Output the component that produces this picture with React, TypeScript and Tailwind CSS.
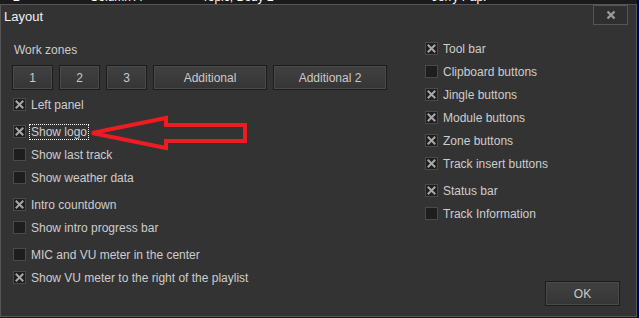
import React from "react";

const font = { fontFamily: '"Liberation Sans", Arial, sans-serif' };

function Box({ checked }: { checked: boolean }) {
  return (
    <div className="w-[13px] h-[13px] shrink-0 border border-[#4a4a4a] bg-[#1e1e1e] flex items-center justify-center">
      {checked && (
        <svg width="9" height="9" viewBox="0 0 9 9">
          <path d="M1.5 1.5 L7.5 7.5 M7.5 1.5 L1.5 7.5" stroke="#a8a8a8" strokeWidth="2" strokeLinecap="square" />
        </svg>
      )}
    </div>
  );
}

function Row({ label, checked, mt = "", focus = false }: { label: string; checked: boolean; mt?: string; focus?: boolean }) {
  return (
    <div className={`h-[23px] flex items-center gap-[3px] ${mt}`}>
      <Box checked={checked} />
      <span
        className={
          focus
            ? "text-[12px] text-[#cdcdcd] leading-[14px] border border-dotted border-white px-px"
            : "text-[12px] text-[#cdcdcd] leading-[14px] px-[2px]"
        }
      >
        {label}
      </span>
    </div>
  );
}

function Btn({ label, w }: { label: string; w: string }) {
  return (
    <div className={`${w} h-[25px] border border-[#1c1c1c] bg-[#1c1c1c]`}>
      <div className="w-full h-full border border-[#4a4a4a] bg-gradient-to-b from-[#404040] to-[#363636] flex items-center justify-center text-[12px] text-[#cacaca]">
        {label}
      </div>
    </div>
  );
}

export default function App() {
  return (
    <div className="w-[639px] h-[318px] bg-[#1b1b1b] relative overflow-hidden" style={font}>
      <div className="flex h-[318px]">
        <div className="w-[637px] flex flex-col">
          {/* top strip with clipped text */}
          <div className="h-[4px] overflow-hidden relative bg-[#1b1b1b] text-white text-[12px] leading-[14px]">
            <div className="flex -mt-[10px]">
              <span className="ml-[13px]">2</span>
              <span className="ml-[70px]">Column A</span>
              <span className="ml-[60px]">Topic, Body 2</span>
              <span className="ml-[158px]">Jerry Pap.</span>
            </div>
          </div>
          {/* dialog */}
          <div className="h-[313px] border border-[#565656] bg-[#333333] flex flex-col">
            <div className="h-[21px] flex items-start justify-between pr-[8px]">
              <span className="pl-[3px] pt-[4px] text-[13px] leading-[15px] text-[#f0f0f0]">Layout</span>
              <div className="w-[35px] h-[20px] border border-[#555555] bg-[#2f2f2f] flex items-center justify-center">
                <svg width="10" height="10" viewBox="0 0 10 10">
                  <path d="M1.5 1.5 L8.5 8.5 M8.5 1.5 L1.5 8.5" stroke="#9a9a9a" strokeWidth="2.4" />
                </svg>
              </div>
            </div>
            <div className="flex-1 flex">
              {/* left column */}
              <div className="w-[424px] pl-[11px] flex flex-col">
                <div className="mt-[16px] ml-[2px] h-[16px] flex items-center text-[12px] text-[#cdcdcd]">Work zones</div>
                <div className="mt-[7px] flex gap-[6px]">
                  <Btn label="1" w="w-[41px]" />
                  <Btn label="2" w="w-[41px]" />
                  <Btn label="3" w="w-[41px]" />
                  <Btn label="Additional" w="w-[114px]" />
                  <Btn label="Additional 2" w="w-[114px]" />
                </div>
                <div className="pl-[1px] flex flex-col">
                  <Row label="Left panel" checked mt="mt-[3px]" />
                  <Row label="Show logo" checked mt="mt-[4px]" focus />
                  <Row label="Show last track" checked={false} />
                  <Row label="Show weather data" checked={false} />
                  <Row label="Intro countdown" checked mt="mt-[4px]" />
                  <Row label="Show intro progress bar" checked={false} />
                  <Row label="MIC and VU meter in the center" checked={false} mt="mt-[4px]" />
                  <Row label="Show VU meter to the right of the playlist" checked />
                </div>
              </div>
              {/* right column */}
              <div className="flex-1 flex flex-col pr-[16px] pb-[10px]">
                <div className="mt-[11px] flex flex-col">
                  <Row label="Tool bar" checked />
                  <Row label="Clipboard buttons" checked={false} />
                  <Row label="Jingle buttons" checked />
                  <Row label="Module buttons" checked />
                  <Row label="Zone buttons" checked />
                  <Row label="Track insert buttons" checked />
                  <Row label="Status bar" checked mt="mt-[4px]" />
                  <Row label="Track Information" checked={false} />
                </div>
                <div className="mt-auto flex justify-end">
                  <Btn label="OK" w="w-[75px]" />
                </div>
              </div>
            </div>
          </div>
          <div className="flex-1 bg-[#1b1b1b]" />
        </div>
        <div className="flex-1 bg-[#000060]" />
      </div>
      {/* red arrow annotation */}
      <svg className="absolute left-0 top-0 pointer-events-none" width="639" height="318">
        <path
          d="M92 133 L166 118 L166 125 L245 125 L245 141 L166 141 L166 148 Z"
          fill="none"
          stroke="#ED1C24"
          strokeWidth="4"
          strokeLinejoin="miter"
        />
      </svg>
    </div>
  );
}
